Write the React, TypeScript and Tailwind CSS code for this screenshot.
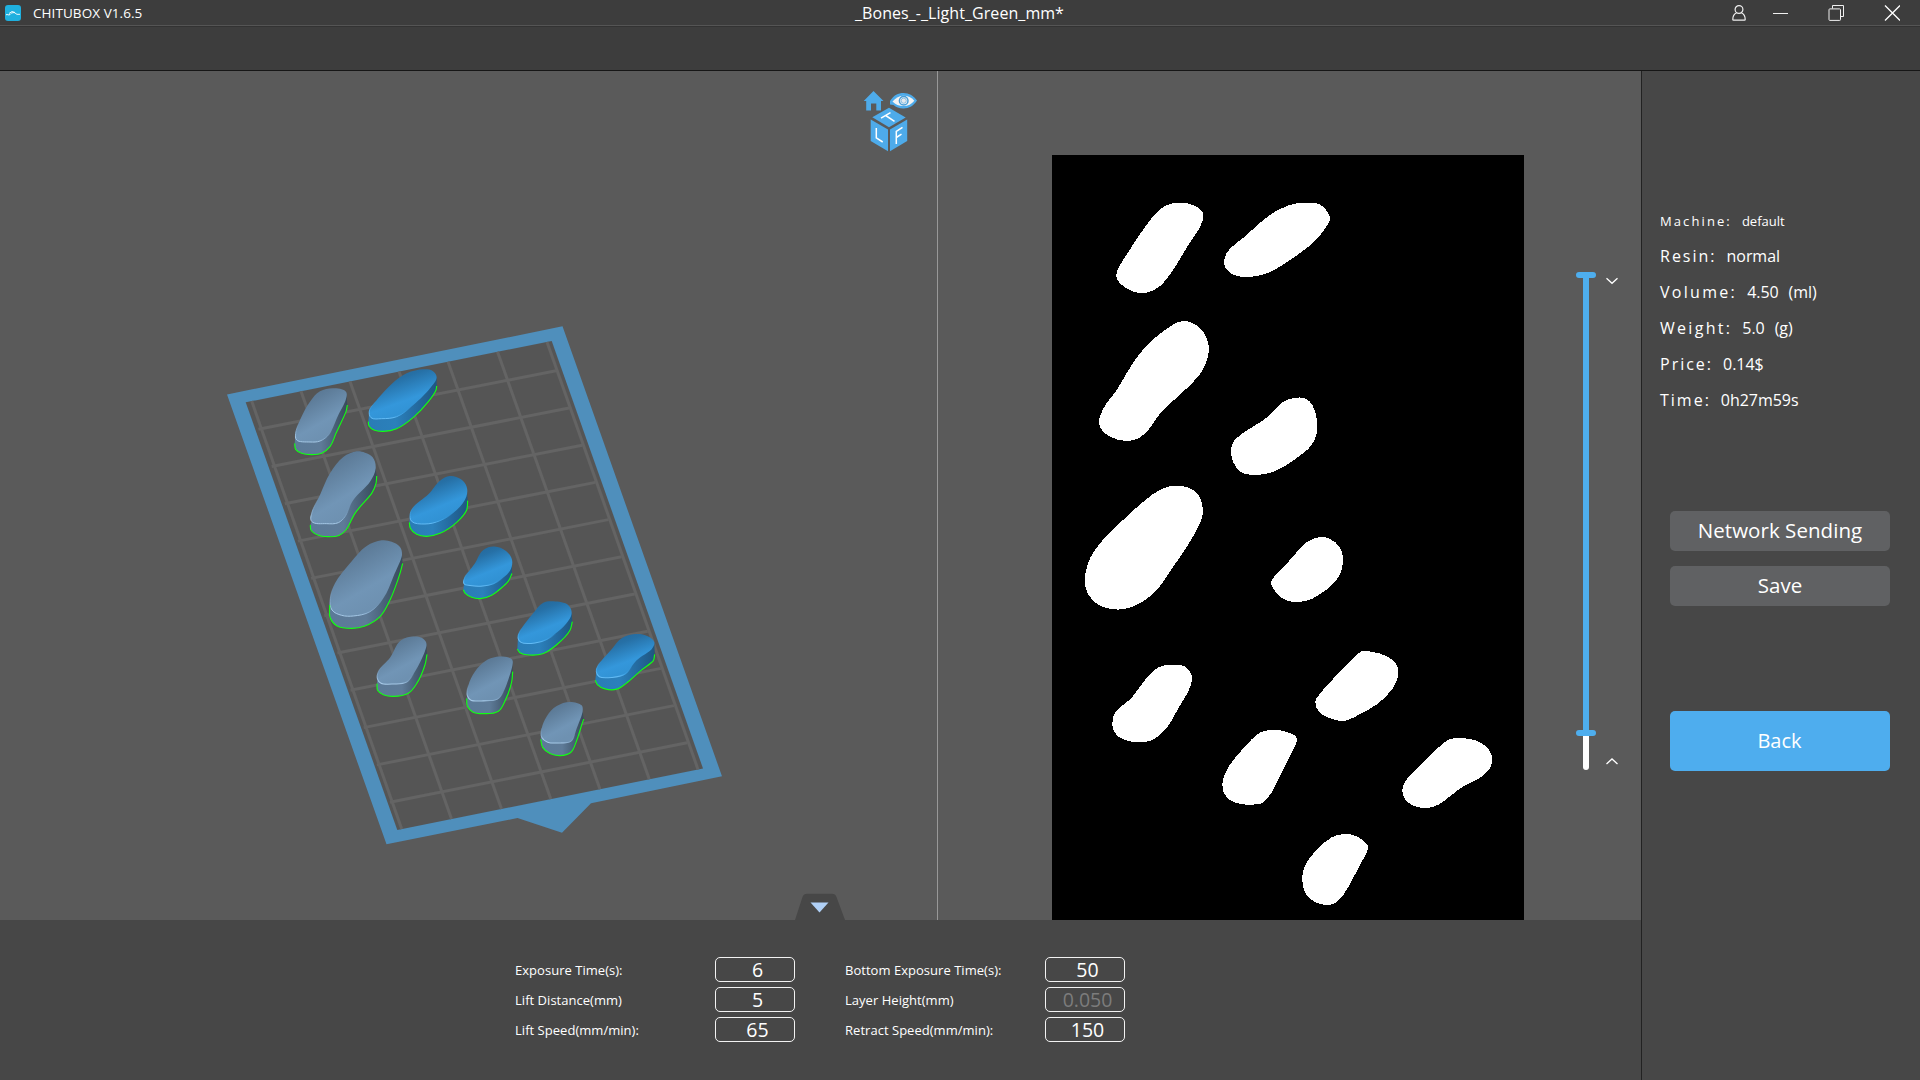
import React from 'react';

type Point = [number, number];

const n = (v: number) => Math.round(v * 10) / 10;

/** Smooth path through the points; handles are capped by the shorter neighbouring segment to avoid overshoot. */
function spline(pts: Point[], closed: boolean): string {
  const len = pts.length;
  const at = (i: number) => (closed ? pts[(i + len) % len] : pts[Math.max(0, Math.min(len - 1, i))]);
  const dist = (a: Point, b: Point) => Math.hypot(b[0] - a[0], b[1] - a[1]);
  const tangent = (i: number): Point => {
    const [a, b, c] = [at(i - 1), at(i), at(i + 1)];
    const la = dist(a, b) || 1;
    const lc = dist(b, c) || 1;
    const wa = Math.sqrt(lc / la);
    const wc = Math.sqrt(la / lc);
    const x = (b[0] - a[0]) * wa + (c[0] - b[0]) * wc;
    const y = (b[1] - a[1]) * wa + (c[1] - b[1]) * wc;
    const l = Math.hypot(x, y) || 1;
    return [x / l, y / l];
  };
  const handle = (i: number, seg: number) => {
    const la = dist(at(i - 1), at(i)) || seg;
    const lc = dist(at(i), at(i + 1)) || seg;
    return 0.345 * Math.min(seg, 1.4 * Math.min(la, lc));
  };
  let d = `M${pts[0][0]} ${pts[0][1]}`;
  const last = closed ? len : len - 1;
  for (let i = 0; i < last; i++) {
    const [p, q] = [at(i), at(i + 1)];
    const [t, u] = [tangent(i), tangent(i + 1)];
    const seg = dist(p, q);
    const [h, k] = [handle(i, seg), handle(i + 1, seg)];
    d += `C${n(p[0] + t[0] * h)} ${n(p[1] + t[1] * h)} ${n(q[0] - u[0] * k)} ${n(q[1] - u[1] * k)} ${q[0]} ${q[1]}`;
  }
  return closed ? d + 'Z' : d;
}

interface Slice {
  group: 'upper' | 'middle' | 'lower';
  pts: Point[];
}

const sliceTransforms = {
  upper: 'translate(-2 -5) scale(.33333)',
  middle: 'translate(-2 315) scale(.33333)',
  lower: 'translate(148 225) scale(.33333 .34439)',
};

const slices: Slice[] = [
  { group: 'upper', pts: [[388, 158], [360, 162], [330, 178], [297, 215], [240, 298], [208, 350], [199, 380], [225, 412], [280, 429], [325, 412], [362, 370], [415, 285], [452, 226], [459, 190], [432, 166]] },
  { group: 'upper', pts: [[775, 158], [740, 160], [690, 177], [640, 210], [590, 255], [532, 306], [523, 345], [545, 371], [592, 381], [650, 370], [735, 320], [805, 262], [840, 208], [835, 190], [807, 162]] },
  { group: 'upper', pts: [[403, 513], [345, 540], [270, 610], [200, 720], [158, 780], [148, 825], [180, 860], [230, 873], [265, 865], [295, 840], [335, 785], [400, 725], [455, 665], [474, 620], [475, 580], [450, 535]] },
  { group: 'upper', pts: [[740, 743], [700, 755], [650, 803], [575, 852], [547, 882], [546, 925], [572, 965], [615, 975], [670, 965], [740, 924], [785, 885], [800, 850], [800, 805], [787, 765], [768, 746]] },
  { group: 'upper', pts: [[375, 1007], [335, 1017], [280, 1055], [150, 1180], [114, 1240], [106, 1310], [130, 1353], [185, 1377], [240, 1373], [310, 1330], [370, 1250], [440, 1140], [459, 1085], [445, 1035], [412, 1012]] },
  { group: 'upper', pts: [[810, 1161], [770, 1177], [720, 1230], [668, 1286], [664, 1305], [700, 1347], [740, 1356], [785, 1347], [860, 1290], [879, 1240], [868, 1190], [840, 1167]] },
  { group: 'middle', pts: [[365, 585], [325, 592], [285, 630], [245, 683], [195, 728], [187, 765], [200, 795], [235, 813], [265, 817], [305, 811], [345, 780], [385, 715], [420, 652], [425, 615], [405, 590]] },
  { group: 'lower', pts: [[495, 787], [484, 788], [450, 817], [410, 857], [365, 905], [346, 935], [356, 962], [390, 982], [430, 990], [475, 973], [530, 942], [575, 900], [594, 860], [592, 830], [560, 802], [520, 790]] },
  { group: 'lower', pts: [[220, 1016], [180, 1024], [130, 1070], [85, 1125], [67, 1175], [80, 1212], [122, 1231], [178, 1231], [190, 1226], [212, 1202], [260, 1112], [286, 1060], [291, 1040], [260, 1022]] },
  { group: 'lower', pts: [[785, 1040], [750, 1043], [710, 1072], [620, 1160], [607, 1190], [622, 1225], [675, 1243], [715, 1233], [790, 1180], [845, 1152], [873, 1120], [873, 1085], [840, 1052]] },
  { group: 'lower', pts: [[435, 1318], [395, 1328], [350, 1365], [314, 1412], [307, 1455], [322, 1498], [360, 1521], [400, 1521], [430, 1495], [460, 1445], [504, 1362], [502, 1350], [470, 1325]] },
];

interface Bone {
  area: 'a' | 'b';
  tint: 'blue' | 'grey';
  top: Point[];
  base: Point[];
}

const boneTransforms = {
  a: 'translate(210 310) scale(.33333)',
  b: 'translate(360 310) scale(.33333 .34439)',
};

const bones: Bone[] = [
  { area: 'a', tint: 'grey', top: [[368, 235], [330, 244], [300, 275], [270, 330], [257, 370], [260, 390], [300, 396], [330, 393], [358, 372], [385, 315], [407, 270], [409, 247], [395, 238]], base: [[254, 400], [257, 418], [275, 430], [305, 434], [335, 430], [360, 410], [378, 370], [408, 305], [412, 285]] },
  { area: 'a', tint: 'blue', top: [[640, 178], [590, 190], [545, 222], [490, 283], [478, 303], [483, 323], [515, 326], [560, 320], [610, 285], [660, 235], [680, 202], [668, 183]], base: [[475, 335], [477, 348], [492, 360], [520, 364], [560, 356], [610, 322], [655, 275], [678, 240], [680, 228]] },
  { area: 'a', tint: 'grey', top: [[440, 424], [400, 441], [360, 490], [330, 555], [306, 607], [305, 634], [350, 641], [385, 638], [405, 620], [430, 570], [480, 515], [497, 475], [488, 442], [465, 428]], base: [[301, 645], [303, 660], [325, 676], [355, 680], [385, 677], [408, 660], [435, 610], [485, 550], [498, 520], [500, 498]] },
  { area: 'a', tint: 'blue', top: [[720, 498], [690, 512], [655, 553], [612, 589], [601, 610], [605, 634], [645, 642], [690, 632], [740, 600], [769, 560], [770, 530], [753, 508]], base: [[598, 637], [601, 655], [620, 673], [650, 679], [690, 670], [740, 637], [770, 600], [773, 572]] },
  { area: 'a', tint: 'grey', top: [[515, 691], [470, 708], [420, 760], [375, 820], [361, 865], [366, 900], [395, 916], [430, 918], [480, 905], [520, 865], [550, 800], [576, 735], [570, 711], [545, 695]], base: [[359, 885], [361, 925], [380, 947], [425, 955], [465, 948], [510, 920], [540, 870], [570, 790], [578, 760]] },
  { area: 'b', tint: 'blue', top: [[403, 687], [370, 697], [345, 735], [315, 775], [312, 795], [330, 800], [362, 802], [400, 795], [450, 757], [456, 725], [438, 700]], base: [[310, 812], [315, 822], [335, 834], [360, 838], [395, 828], [445, 787], [456, 765]] },
  { area: 'b', tint: 'blue', top: [[580, 846], [550, 850], [520, 880], [480, 932], [474, 952], [483, 965], [525, 967], [560, 957], [615, 915], [635, 880], [625, 857]], base: [[472, 985], [480, 995], [500, 1001], [548, 998], [590, 972], [630, 930], [637, 905]] },
  { area: 'b', tint: 'blue', top: [[825, 941], [785, 953], [755, 985], [715, 1030], [709, 1050], [718, 1065], [755, 1067], [795, 1057], [830, 1017], [875, 985], [883, 965], [863, 947]], base: [[706, 1075], [712, 1088], [735, 1100], [770, 1101], [800, 1083], [845, 1045], [880, 1018], [884, 1000]] },
  { area: 'b', tint: 'grey', top: [[160, 948], [122, 960], [90, 1010], [57, 1046], [52, 1070], [63, 1084], [100, 1086], [140, 1080], [165, 1050], [195, 990], [199, 967], [185, 952]], base: [[51, 1085], [53, 1105], [70, 1117], [100, 1122], [145, 1113], [170, 1085], [195, 1030], [201, 1000]] },
  { area: 'b', tint: 'grey', top: [[410, 1007], [375, 1020], [345, 1050], [325, 1090], [322, 1120], [333, 1133], [370, 1135], [412, 1130], [430, 1110], [456, 1038], [457, 1016], [445, 1009]], base: [[320, 1128], [322, 1150], [338, 1167], [370, 1172], [415, 1165], [435, 1135], [455, 1080], [458, 1050]] },
  { area: 'b', tint: 'grey', top: [[630, 1138], [590, 1150], [560, 1180], [545, 1215], [545, 1240], [563, 1255], [600, 1257], [633, 1252], [650, 1215], [668, 1165], [665, 1148]], base: [[542, 1247], [548, 1270], [570, 1288], [600, 1294], [632, 1285], [650, 1250], [665, 1205], [671, 1188]] },
];

function extreme(pts: Point[], side: 1 | -1): Point {
  return pts.reduce((a, b) => (b[0] * side > a[0] * side ? b : a));
}

function BoneModel({ bone }: { bone: Bone }) {
  const top = spline(bone.top, true);
  const base = spline(bone.base, false);
  const left = extreme(bone.top, -1);
  const right = extreme(bone.top, 1);
  return (
    <g transform={boneTransforms[bone.area]}>
      <path d={`${base}L${right[0]} ${right[1]}L${left[0]} ${left[1]}Z`} fill={`url(#${bone.tint}-side)`} />
      <path d={top} fill={`url(#${bone.tint}-top)`} />
      <path d={top} fill="none" stroke={`url(#${bone.tint}-rim)`} strokeWidth="3" />
      <path d={base} fill="none" stroke="#12ff12" strokeWidth="3.400" />
    </g>
  );
}

const columnTops = [251.7, 301, 350, 399, 448, 497.5, 547];
const columnBottoms = [401.7, 451.5, 501.5, 550.8, 600, 649.3, 698];

function BuildPlate() {
  return (
    <svg className="block h-full w-full" viewBox="0 71 937 849">
      <defs>
        <linearGradient id="blue-side"><stop offset="0" stopColor="#2a7cb6" /><stop offset=".4" stopColor="#2b80bb" /><stop offset=".75" stopColor="#23679b" /><stop offset="1" stopColor="#1f5680" /></linearGradient>
        <linearGradient id="grey-side"><stop offset="0" stopColor="#5b7a98" /><stop offset=".5" stopColor="#5e7b98" /><stop offset=".75" stopColor="#496178" /><stop offset="1" stopColor="#384a5a" /></linearGradient>
        <linearGradient id="blue-top" x1=".2" y1="0" x2=".62" y2=".85"><stop offset="0" stopColor="#236597" /><stop offset=".3" stopColor="#2670a6" /><stop offset=".75" stopColor="#3497db" /><stop offset="1" stopColor="#3192d4" /></linearGradient>
        <linearGradient id="grey-top" x1=".15" y1="0" x2=".62" y2=".85"><stop offset="0" stopColor="#55728d" /><stop offset=".3" stopColor="#5e7d9a" /><stop offset=".75" stopColor="#7195b6" /><stop offset="1" stopColor="#6e91b1" /></linearGradient>
        <linearGradient id="blue-rim" x1=".6" y1=".3" x2=".45" y2="1"><stop offset=".6" stopColor="#3aa0e6" stopOpacity="0" /><stop offset=".88" stopColor="#3fa3e6" /><stop offset="1" stopColor="#62bbf5" /></linearGradient>
        <linearGradient id="grey-rim" x1=".6" y1=".3" x2=".45" y2="1"><stop offset=".6" stopColor="#7c9fc0" stopOpacity="0" /><stop offset=".88" stopColor="#84a8c9" /><stop offset="1" stopColor="#a5c8e6" /></linearGradient>
      </defs>
      <path d="M227 394.5 562.5 326.3 722 776.3 591 803.2 562 832.8 517.5 818 386.5 844.3Z" fill="#4f8fbc" />
      <path d="M245.7 402.3 551.7 341 703 768.4 397.3 830Z" fill="#555555" />
      <g stroke="#646464" strokeWidth="3">
        {columnTops.map((x, i) => (
          <line key={x} x1={x} y1={402.3 - (x - 245.7) * 0.2003} x2={columnBottoms[i]} y2={830 - (columnBottoms[i] - 397.3) * 0.2015} />
        ))}
        {Array.from({ length: 11 }, (_, i) => (
          <line key={i} x1={258.5 + i * 13.15} y1={429.2 + i * 37.3} x2={556 + i * 13.1} y2={370.8 + i * 37.2} />
        ))}
      </g>
      {bones.map((bone, i) => <BoneModel key={i} bone={bone} />)}
    </svg>
  );
}

function ViewCube() {
  return (
    <svg className="absolute top-[17px] left-[860px] h-[68px] w-[60px]" viewBox="860 88 60 68">
      <path d="M873.5 91 883.5 101H881V110.5H876.3V103.5H871V110.5H866.2V101H863.7Z" fill="#4eabea" />
      <path d="M890 104.5V101C894 95 898 93 903.500 93C909 93 914 96 917 100.500C914 105.500 909 108.500 903.500 108.500C899 108.500 896 107 893.500 105Z" fill="#4eabea" />
      <path d="M892.500 101.500C896 97.500 899.500 95.700 903.500 95.700C908 95.700 911.500 97.500 914.300 100.700C911.500 104.300 908 106 903.500 106C899 106 895.500 104.500 892.500 101.500Z" fill="#f4f4f4" />
      <circle cx="903.700" cy="100.700" r="4.300" fill="#f4f4f4" stroke="#4a9fd8" strokeWidth="1.500" />
      <circle cx="903.700" cy="100.700" r="2.600" fill="#e4e8ec" stroke="#4a9fd8" strokeWidth=".6" />
      <g fill="#4eabea">
        <path d="M872.300 117.300 889 107.800 905.700 117.600 889 127.300Z" />
        <path d="M870.700 119.500 888 129.500V151.200L870.700 141Z" />
        <path d="M890 129.500 907.200 119.500V141L890 151.200Z" />
      </g>
      <g fill="none" stroke="#fff" strokeWidth="1.500">
        <path d="M881 118.200 890.500 112.700M885.700 115.500 894.500 121.300" />
        <path d="M876.300 128V137.800L882.700 142" />
        <path d="M896.300 144V131.500L902.500 127.300M896.300 137.500 901.500 134.200" />
      </g>
    </svg>
  );
}

function SlicePreview() {
  return (
    <svg className="block h-full w-full" viewBox="0 0 472 765" fill="#fff" shapeRendering="crispEdges">
      {slices.map((slice, i) => (
        <path key={i} transform={sliceTransforms[slice.group]} d={spline(slice.pts, true)} />
      ))}
    </svg>
  );
}

function LayerSlider() {
  return (
    <div className="flex gap-[10px] pt-[201px]">
      <div className="flex h-[499px] w-5 flex-col items-center">
        <div className="h-[6px] w-5 shrink-0 rounded-full bg-[#4eaeee]" />
        <div className="h-[452px] w-[6px] shrink-0 bg-[#4eaeee]" />
        <div className="h-[6px] w-5 shrink-0 rounded-full bg-[#4eaeee]" />
        <div className="h-[34px] w-[6px] shrink-0 rounded-b-[3px] bg-white" />
      </div>
      <div className="flex h-[498px] flex-col justify-between pt-[5px] pb-[5px]">
        <svg className="h-2 w-3" viewBox="0 0 12 8" fill="none" stroke="#fff" strokeWidth="1.300"><path d="M.5 1.300 6 6.300 11.500 1.300" /></svg>
        <svg className="h-2 w-3" viewBox="0 0 12 8" fill="none" stroke="#fff" strokeWidth="1.300"><path d="M.5 7 6 2 11.500 7" /></svg>
      </div>
    </div>
  );
}

function TitleBar() {
  return (
    <header className="grid h-[25px] grid-cols-[1fr_auto_1fr] items-center">
      <div className="flex items-center gap-[12px] pl-[5px]">
        <svg className="h-4 w-4" viewBox="0 0 16 16">
          <rect width="16" height="16" rx="3" fill="#1fb0df" />
          <path d="M1 9.800C2.500 8.800 3.500 10.800 5 9.500C6 8.500 6.500 7.500 8 7.800C9.500 6.500 10.500 9 12 9.300H15M4 8.500 7 6.500 10 7.500" fill="none" stroke="#fff" strokeWidth=".9" />
        </svg>
        <span className="pt-[1px] text-[13.5px] tracking-[0.07px]">CHITUBOX V1.6.5</span>
      </div>
      <h1 className="pr-[1px] text-[16px] tracking-[0.06px] whitespace-nowrap">_Bones_-_Light_Green_mm*</h1>
      <div className="flex items-center justify-end pr-5">
        <svg className="mr-[26px] h-4 w-[14px]" viewBox="0 0 14 16" fill="none" stroke="#f0f0f0" strokeWidth="1.200">
          <circle cx="7" cy="4.500" r="3.900" />
          <path d="M4.500 8C2 9 .8 11 .8 14.500Q.8 15.200 1.500 15.200H12.500Q13.200 15.200 13.200 14.500C13.200 11 12 9 9.500 8" />
        </svg>
        <svg className="mr-[40px] h-4 w-4" viewBox="0 0 16 16"><path d="M1 8.500H16" stroke="#f0f0f0" /></svg>
        <svg className="mr-[40px] h-4 w-4" viewBox="0 0 16 16" fill="none" stroke="#f0f0f0">
          <path d="M4.500 3.500V.5H15.500V11.500H12.500" />
          <rect x="1" y="3.900" width="11.500" height="11.500" rx=".8" />
        </svg>
        <svg className="h-4 w-4" viewBox="0 0 16 16"><path d="M1 .5 16 15.500M16 .5 1 15.500" stroke="#fff" strokeWidth="1.300" /></svg>
      </div>
    </header>
  );
}

const settings = [
  { label: 'Exposure Time(s):', value: '6' },
  { label: 'Bottom Exposure Time(s):', value: '50' },
  { label: 'Lift Distance(mm)', value: '5' },
  { label: 'Layer Height(mm)', value: '0.050', disabled: true },
  { label: 'Lift Speed(mm/min):', value: '65' },
  { label: 'Retract Speed(mm/min):', value: '150' },
];

function SettingsPanel() {
  return (
    <section className="relative h-40 bg-[#474747] pt-[37px] pl-[515px]">
      <svg className="absolute -top-[27px] left-[795px] h-[27px] w-[50px]" viewBox="0 0 50 27">
        <path d="M0 27 7.500 4Q8.700 .7 12 .7H37Q40.300 .7 41.500 4L50 27Z" fill="#474747" />
        <path d="M15.500 9.500H33.500L24.500 19.500Z" fill="#b0d0f6" />
      </svg>
      <div className="grid w-[610px] grid-cols-[280px_280px] gap-x-[50px] gap-y-[5px]">
        {settings.map((s) => (
          <div key={s.label} className="flex h-[25px] items-center justify-between">
            <label className="pt-[2px] text-[13px] tracking-[0.03px] whitespace-nowrap">{s.label}</label>
            <div className={`flex h-[25px] w-20 items-center justify-center rounded-[5px] border border-[#f2f2f2] pl-[5px] text-[19.5px] leading-none ${s.disabled ? 'text-[#7c7c7c]' : ''}`}>{s.value}</div>
          </div>
        ))}
      </div>
    </section>
  );
}

const details = [
  { label: 'Resin:', values: ['normal'], wide: false },
  { label: 'Volume:', values: ['4.50', '(ml)'], wide: true },
  { label: 'Weight:', values: ['5.0', '(g)'], wide: true },
  { label: 'Price:', values: ['0.14$'], wide: false },
  { label: 'Time:', values: ['0h27m59s'], wide: false },
];

function SidePanel() {
  return (
    <aside className="flex flex-col border-l border-[#222] bg-[#474747] pt-[131px]">
      <dl className="pl-[18px] text-[16px]">
        <div className="flex h-9 items-center gap-[10px] pt-[3px] text-[13px]">
          <dt className="tracking-[2.1px]">Machine:</dt>
          <dd>default</dd>
        </div>
        {details.map((d) => (
          <div key={d.label} className="flex h-9 items-center gap-[10px]">
            <dt className={d.wide ? 'tracking-[2.3px]' : 'tracking-[2px]'}>{d.label}</dt>
            {d.values.map((v) => <dd key={v} className="tracking-[-0.05px]">{v}</dd>)}
          </div>
        ))}
      </dl>
      <div className="mt-[93px] flex flex-col gap-[15px] pr-[30px] pl-[28px] text-[20.5px]">
        <button className="h-10 rounded-[5px] bg-[#606163] pb-[2px] tracking-[0.05px]">Network Sending</button>
        <button className="h-10 rounded-[5px] bg-[#606163] pb-[2px]">Save</button>
        <button className="mt-[90px] h-[60px] rounded-[5px] bg-[#4eadee] pr-[1px] text-[20px]">Back</button>
      </div>
    </aside>
  );
}

export default function App() {
  return (
    <div className="flex h-[1080px] w-[1920px] flex-col overflow-hidden bg-[#3d3d3d] font-['Open_Sans',sans-serif] text-white">
      <TitleBar />
      <div className="h-[46px] border-t border-b border-t-[#555] border-b-[#161616]">
        <div className="h-full border-t border-[#333]" />
      </div>
      <main className="grid flex-1 grid-cols-[1641px_279px]">
        <div className="flex flex-col">
          <div className="flex h-[849px] bg-[#5a5a5a]">
            <div className="relative h-full w-[938px] border-r border-[#989898]">
              <BuildPlate />
              <ViewCube />
            </div>
            <div className="ml-[114px] w-[472px] pt-[84px]">
              <div className="h-[765px] bg-black"><SlicePreview /></div>
            </div>
            <div className="ml-[52px]"><LayerSlider /></div>
          </div>
          <SettingsPanel />
        </div>
        <SidePanel />
      </main>
    </div>
  );
}
